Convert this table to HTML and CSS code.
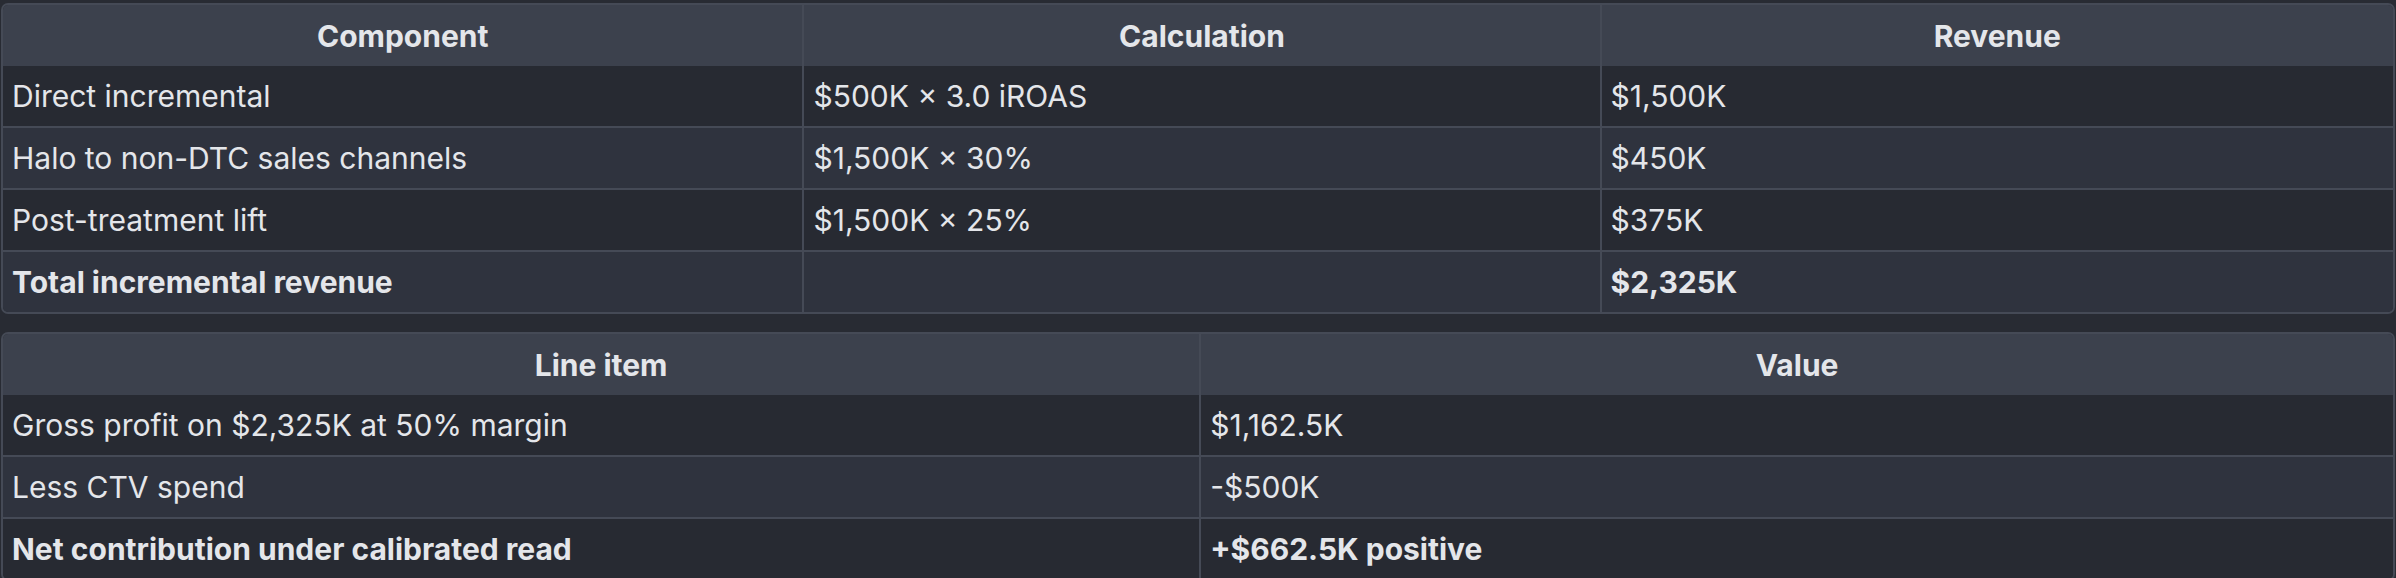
FILE: index.html
```html
<!DOCTYPE html>
<html lang="en">
<head>
<meta charset="utf-8">
<title>Incremental revenue</title>
<link rel="stylesheet" href="styles.css">
</head>
<body>
<div class="page">
  <table class="grid three">
    <colgroup><col class="c-component"><col class="c-calc"><col class="c-rev"></colgroup>
    <thead>
      <tr><th>Component</th><th>Calculation</th><th>Revenue</th></tr>
    </thead>
    <tbody>
      <tr><td>Direct incremental</td><td>$500K × 3.0 iROAS</td><td>$1,500K</td></tr>
      <tr><td>Halo to non-DTC sales channels</td><td>$1,500K × 30%</td><td>$450K</td></tr>
      <tr><td>Post-treatment lift</td><td>$1,500K × 25%</td><td>$375K</td></tr>
      <tr><td><strong>Total incremental revenue</strong></td><td></td><td><strong>$2,325K</strong></td></tr>
    </tbody>
  </table>
  <table class="grid two">
    <colgroup><col class="c-item"><col class="c-value"></colgroup>
    <thead>
      <tr><th>Line item</th><th>Value</th></tr>
    </thead>
    <tbody>
      <tr><td>Gross profit on $2,325K at 50% margin</td><td>$1,162.5K</td></tr>
      <tr><td>Less CTV spend</td><td>-$500K</td></tr>
      <tr><td><strong>Net contribution under calibrated read</strong></td><td><strong>+$662.5K positive</strong></td></tr>
    </tbody>
  </table>
</div>
</body>
</html>
```
FILE: styles.css
```css
html, body {
  margin: 0;
  padding: 0;
  background: #282b33;
}
body {
  font-family: "Inter", "Noto Sans", "Liberation Sans", sans-serif;
  color: #e4e6ea;
  font-size: 30px;
}
.page {
  padding: 3px 1px 0;
  display: flex;
  flex-direction: column;
  gap: 18px;
}
.grid {
  width: 100%;
  table-layout: fixed;
  border-collapse: separate;
  border-spacing: 0;
  border: 2px solid #454a56;
  border-radius: 7px;
  overflow: hidden;
}
.c-component { width: 33.45%; }
.c-calc { width: 33.35%; }
.c-rev { width: 33.2%; }
.c-item { width: 50.05%; }
.c-value { width: 49.95%; }
.grid th, .grid td {
  padding: 0 9px;
  line-height: 32px;
  text-align: left;
  white-space: nowrap;
}
.grid th {
  height: 61px;
  background: #3c414d;
  font-weight: 700;
  text-align: center;
}
.grid td {
  height: 60px;
}
.grid th + th, .grid td + td {
  border-left: 2px solid #454a56;
}
.grid tbody tr + tr td {
  border-top: 2px solid #454a56;
}
.grid tbody tr:nth-child(odd) td {
  background: #272a32;
}
.grid tbody tr:nth-child(even) td {
  background: #2f333e;
}
.grid strong {
  font-weight: 700;
}
```
